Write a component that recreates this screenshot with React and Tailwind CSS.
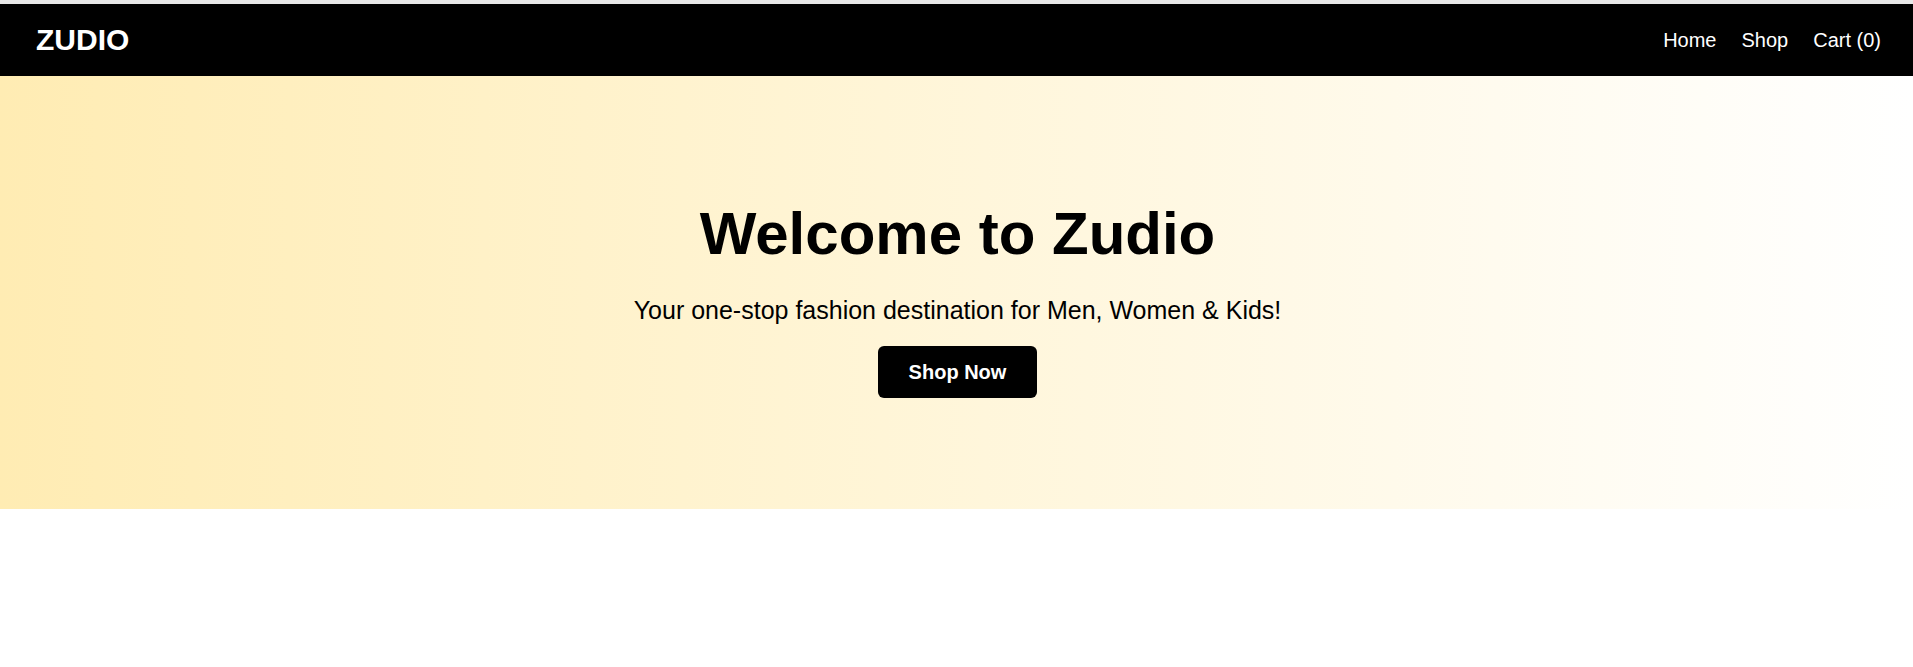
export default function App() {
  return (
    <div className="min-h-screen bg-white" style={{ fontFamily: '"Liberation Sans", Arial, sans-serif' }}>
      <div className="h-[4px] bg-[#e8e8e8]" />
      <header className="flex h-[72px] items-center justify-between bg-black pl-[36px] pr-[32px] text-white">
        <div className="text-[30px] font-bold leading-none">ZUDIO</div>
        <nav className="flex items-center gap-[25px] text-[20px] leading-none">
          <a>Home</a>
          <a>Shop</a>
          <a>Cart (0)</a>
        </nav>
      </header>
      <section className="flex flex-col items-center bg-gradient-to-r from-[#ffecb3] to-white pt-[128px] pb-[111px] pl-[2px] text-black">
        <h1 className="text-[60px] font-bold leading-[60px]">Welcome to Zudio</h1>
        <p className="mt-[31px] text-[25px] leading-[30px]">Your one-stop fashion destination for Men, Women &amp; Kids!</p>
        <button className="mt-[21px] rounded-[6px] bg-black px-[31px] py-[14px] text-[20px] font-bold leading-[24px] text-white">
          Shop Now
        </button>
      </section>
    </div>
  );
}
